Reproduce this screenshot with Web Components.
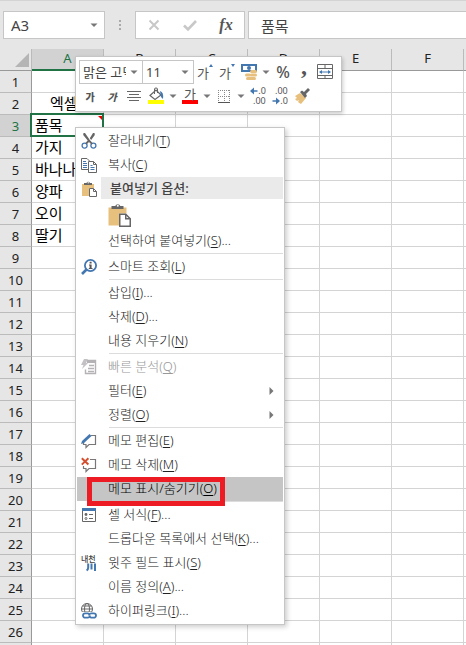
<!DOCTYPE html>
<html lang="ko">
<head>
<meta charset="utf-8">
<meta name="viewport" content="width=device-width, initial-scale=1">
<title>Sheet</title>
<style>
  html, body { height: 100%; }
  body {
    margin: 0;
    overflow: hidden;
    background: #fff;
    font-family: "Noto Sans", "Noto Sans CJK KR", sans-serif;
    font-size: 13px;
    color: #444;
    --chrome: #e6e6e6;
    --line: #d4d4d4;
    --edge: #c6c6c6;
    --blue: #4377b0;
    --green: #217346;
  }
</style>
</head>
<body>
<work-book></work-book>

<script>
const ICONS = {
  cut: `<g fill="none" stroke="#4377b0" stroke-width="1.3"><circle cx="3.600" cy="12.600" r="2.500"/><circle cx="12.400" cy="12.600" r="2.500"/></g>
    <path d="M2.500 0h1.500l5 7.200 2.800 3-1.400 1.200L8 8.900l-2.200 2.400-1.400-1.200 2.300-2.500L2.200 2zM13.500 0H12L8.800 5.200l1.400 1.800L13.800 2z" fill="#666"/>`,
  copy: `<g fill="#fff" stroke="#666"><path d="M.5 1.500h5.500l2.500 2.500v8.500h-8z"/><path d="M7.500 4.500h5l3 3v8h-8z"/><path d="M12.500 4.500v3h3" fill="none"/></g>
    <path d="M2 4.500h3M2 6.500h4M2 8.500h4M2 10.500h4M9.500 8.500h2M9.500 10.500h4M9.500 12.500h4" stroke="#4377b0"/>`,
  paste: `<path d="M1 3h12v4H8v8H1z" fill="#e8c07d"/><path d="M3 4V2h2.500a1.800 1.800 0 013.400 0H11v2z" fill="#666"/><circle cx="7.200" cy="1.800" r=".7" fill="#fff"/>
    <path d="M8.500 7.500h4l3 3v5h-7z" fill="#fff" stroke="#666"/><path d="M12.500 7.500v3h3" fill="none" stroke="#666"/>`,
  lookup: `<circle cx="9.500" cy="6.500" r="5.600" fill="#fff" stroke="#4377b0" stroke-width="1.800"/><path d="M5.500 10.500L1 15" stroke="#4377b0" stroke-width="2.600"/>
    <path d="M8.600 2.800h2v1.600h-2zM8 5.500h2.600v3.600h.9v1H7.800v-1h.8V6.500H8z" fill="#555"/>`,
  quick: `<path d="M6.500 1.500h8v13h-10v-4" fill="none" stroke="#b5b2b5" stroke-width="1.400"/><path d="M6 1h9v3H6z" fill="#b5b2b5"/><path d="M3 0h4L5 4h2L1 10l1.500-4H0z" fill="#c4c1c4"/>
    <path d="M8 6.500h5M7 9.500h6M7 12.500h6" stroke="#b5b2b5" stroke-width="1.400"/>`,
  edit: `<path d="M10 2.500h4.500v9H8L5 14.500v-3H2.500V9" fill="none" stroke="#777" stroke-width="1.200"/><path d="M8.500 1l2 2L3 10l-3 1 1-3z" fill="#4377b0"/>`,
  remove: `<path d="M9 2.500h5.500v9H8L5 14.500v-3H2.500V9" fill="none" stroke="#777" stroke-width="1.200"/><path d="M.8 1.200l6.600 6.200M7.400 1.200L.8 7.600" stroke="#d2502f" stroke-width="2"/>`,
  format: `<path d="M1.500 1.500h13v13h-13z" fill="#fff" stroke="#666"/><path d="M1 1h14v3H1z" fill="#4377b0"/><circle cx="5" cy="7.500" r="1.400" fill="#666"/><circle cx="5" cy="11.500" r="1" fill="none" stroke="#666"/><path d="M8 7.500h4M8 11.500h4" stroke="#666"/>`,
  ruby: `<text x="0" y="7" font-size="8" font-weight="500" fill="#444">내천</text><path d="M7.200 8.500v4q0 2-1.600 3M10.500 8.500v6M14 8.500v7.500" fill="none" stroke="#4377b0" stroke-width="2"/>`,
  link: `<g fill="none" stroke="#666"><circle cx="6" cy="6" r="5.500"/><ellipse cx="6" cy="6" rx="2.500" ry="5.500"/><path d="M.5 6h11M1.500 3h9M1.500 9h9"/></g>
    <rect x="1" y="9" width="15" height="7" fill="#fff"/><g fill="none" stroke="#4377b0" stroke-width="1.800"><path d="M9 12.500a2.400 2.400 0 01-2.400 2.200H4.200a2.200 2.200 0 010-4.400h2.400q1 0 1.700.8"/><path d="M8 12.500a2.400 2.400 0 012.400-2.200h2.400a2.200 2.200 0 010 4.400h-2.400q-1 0-1.700-.8"/></g>`,
  money: `<path d="M0 0h16v8H0z" fill="#4377b0"/><path d="M2 2h12v4H2z" fill="#fff"/><circle cx="8" cy="4" r="2" fill="#4377b0"/><path d="M4 8.500h12V16H4z" fill="#fff"/>
    <g fill="#e8c07d"><rect x="9" y="6" width="7" height="3" rx="1.500"/><rect x="9" y="9.500" width="7" height="3" rx="1.500"/><rect x="4" y="9.500" width="6" height="3" rx="1.500"/><rect x="5" y="13" width="10" height="3" rx="1.500"/></g>`,
  merge: `<g fill="none" stroke="#666"><path d="M.5.500h15v14H.5zM.5 4.500h15M.5 11.500h15M8 .5v4M8 11.500v3"/></g><path d="M3 8h10" stroke="#4377b0"/><path d="M5 6L2 8l3 2zM11 6l3 2-3 2z" fill="#4377b0"/>`,
  align: `<path d="M1 3.500h14M3 6.500h10M1 9.500h14M3 12.500h10" stroke="#666"/>`,
  bucket: `<path d="M2 7.500L8 2l5 5-6 4.500z" fill="#fff" stroke="#666" stroke-width="1.200"/><path d="M6.500 6V1q0-1 1.500-1t1.500 1v4" fill="none" stroke="#666"/><path d="M12 3q4 1 3 8l-2-2z" fill="#4377b0"/><path d="M0 12h16v4H0z" fill="#ff0"/>`,
  borders: `<g stroke="#888" stroke-dasharray="1 1"><path d="M2 2.500h12M2 8.500h12M2.500 2v12M8.500 2v12M13.500 2v12" fill="none"/></g><path d="M2 14.500h12" stroke="#555"/>`,
  brush: `<path d="M1 8l5-3 6 5-5 6q-2-1-3-2l1-2-2 1-2-2 2-1z" fill="#e8c07d"/><path d="M6 4l2-1.500 2 1.500 4-4 2 2-4 4 1 2-2 2z" fill="#666"/>`,
  arrowleft: `<path d="M15 8H4" stroke="#4377b0" stroke-width="3"/><path d="M8 1L0 8l8 7z" fill="#4377b0"/>`,
  arrowright: `<path d="M1 8h11" stroke="#4377b0" stroke-width="3"/><path d="M8 1l8 7-8 7z" fill="#4377b0"/>`,
  cancel: `<path d="M3.500 3.500l9 9M12.500 3.500l-9 9" stroke="#c8c8c8" stroke-width="2"/>`,
  accept: `<path d="M2 8.500l4 4L14 4" fill="none" stroke="#c8c8c8" stroke-width="2.600"/>`,
  caret: `<path d="M4.500 6.500h7L8 10z" fill="#777"/>`,
  right: `<path d="M6.500 4l4 4-4 4z" fill="#777"/>`
};

class UiIcon extends HTMLElement {
  connectedCallback() {
    this.attachShadow({ mode: "open" }).innerHTML = `
      <style>
        :host { display: block; flex: none; width: var(--size, 16px); height: var(--size, 16px); }
        svg { display: block; width: 100%; height: 100%; overflow: visible; }
      </style>
      <svg viewBox="0 0 16 16" aria-hidden="true">${ICONS[this.getAttribute("name")]}</svg>`;
  }
}

class FormulaBar extends HTMLElement {
  connectedCallback() {
    this.attachShadow({ mode: "open" }).innerHTML = `
      <style>
        :host { display: flex; padding: 10px 0 10px 3px; background: var(--chrome); border-top: 1px solid var(--line); }
        .box { display: flex; align-items: center; box-sizing: border-box; height: 28px; background: #fff; border: 1px solid var(--edge); }
        .name { flex: none; width: 102px; }
        .grip { display: flex; flex: none; flex-direction: column; justify-content: center; align-items: center; gap: 2px; width: 30px; }
        .grip i { width: 2px; height: 2px; background: #aaa; }
        input { flex: 1; min-width: 0; border: 0; padding: 0; outline: 0; background: none; font: inherit; font-size: 15px; color: #444; }
        .name input { padding-left: 7px; }
        button { display: flex; justify-content: center; align-items: center; border: 0; padding: 0; background: none; color: #555; }
        .name button { width: 20px; }
        .tools { flex: none; }
        .tools button { width: 36px; }
        .fx { font: italic bold 16px "Liberation Serif", serif; }
        .formula { flex: 1; min-width: 0; margin-left: 3px; border-right: 0; }
        .formula input { padding-left: 12px; }
      </style>
      <div class="box name">
        <input aria-label="이름 상자" value="A3">
        <button aria-label="이름 목록"><ui-icon name="caret"></ui-icon></button>
      </div>
      <div class="grip"><i></i><i></i><i></i></div>
      <div class="box tools">
        <button aria-label="취소"><ui-icon name="cancel"></ui-icon></button>
        <button aria-label="입력"><ui-icon name="accept"></ui-icon></button>
        <button class="fx">fx</button>
      </div>
      <div class="box formula"><input aria-label="수식 입력줄" value="품목"></div>`;
  }
}

class SheetGrid extends HTMLElement {
  connectedCallback() {
    const cols = ["A", "B", "C", "D", "E", "F", ""];
    const lastRow = 26;
    const data = { 2: "엑셀", 3: "품목", 4: "가지", 5: "바나나", 6: "양파", 7: "오이", 8: "딸기" };
    let rows = "";
    for (let r = 1; r <= lastRow + 1; r++) {
      const on = r === 3 ? ' class="on"' : "";
      const cells = cols.map((c, i) => {
        const cls = i === 0 && r === 3 ? ' class="active"' : i === 0 && r === 2 ? ' class="title"' : "";
        return `<td${cls}>${i === 0 && data[r] ? data[r] : ""}</td>`;
      });
      rows += `<tr><th scope="row"${on}>${r > lastRow ? "" : r}</th>${cells.join("")}</tr>`;
    }
    this.attachShadow({ mode: "open" }).innerHTML = `
      <style>
        :host { display: block; overflow: hidden; }
        table { table-layout: fixed; border-spacing: 0; width: max-content; }
        .head { width: 32px; }
        .col { width: 72px; }
        th, td { box-sizing: border-box; height: 22px; padding: 0; line-height: 20px; white-space: nowrap; }
        th { background: var(--chrome); color: #222; font-weight: 400; font-size: 13px; }
        thead th { border-right: 1px solid #bbb; border-bottom: 1px solid #999; line-height: 18px; vertical-align: top; }
        thead th.on { border-bottom: 2px solid var(--green); }
        tbody th { border-right: 1px solid #999; border-bottom: 1px solid #bbb; }
        th.on { background: #d2d2d2; color: var(--green); }
        td { border-right: 1px solid var(--line); border-bottom: 1px solid var(--line); padding-left: 3px; line-height: 20px; vertical-align: top; font-size: 15px; color: #000; }
        .title { padding-left: 18px; }
        .corner::after {
          content: "";
          display: block;
          width: 14px;
          height: 14px;
          margin: 4px 2px 0 auto;
          background: #b5b5b5;
          clip-path: polygon(100% 0, 100% 100%, 0 100%);
        }
        .active { position: relative; }
        .active::before { content: ""; position: absolute; inset: -2px -1px -1px -2px; border: 2px solid var(--green); }
        .active::after { content: ""; position: absolute; top: 1px; right: 1px; border: 2px solid; border-color: #e00 #e00 transparent transparent; }
      </style>
      <table>
        <colgroup><col class="head">${cols.map(() => '<col class="col">').join("")}</colgroup>
        <thead><tr><th class="corner"></th>${cols.map(c => `<th scope="col"${c === "A" ? ' class="on"' : ""}>${c}</th>`).join("")}</tr></thead>
        <tbody>${rows}</tbody>
      </table>`;
  }
}

class MiniToolbar extends HTMLElement {
  connectedCallback() {
    const caret = `<button class="more" aria-label="더 보기"><ui-icon name="caret"></ui-icon></button>`;
    const tool = (name, label) => `<button aria-label="${label}"><ui-icon name="${name}"></ui-icon></button>`;
    this.attachShadow({ mode: "open" }).innerHTML = `
      <style>
        :host { display: block; box-sizing: border-box; padding: 3px; background: #fff; border: 1px solid var(--edge); box-shadow: 1px 2px 4px rgba(0, 0, 0, .2); }
        .row { display: flex; height: 24px; }
        .combo { display: grid; box-sizing: border-box; width: 64px; border: 1px solid var(--edge); }
        .combo + .combo { width: 51px; border-left: 0; }
        select, .combo ui-icon { grid-area: 1 / 1; }
        .combo ui-icon { justify-self: end; align-self: center; pointer-events: none; }
        select { appearance: none; min-width: 0; width: 100%; border: 0; padding: 0 16px 0 3px; background: none; color: #444; font: inherit; }
        button { display: flex; justify-content: center; align-items: center; width: 22px; border: 0; padding: 0; background: none; font: inherit; font-size: 13px; color: #555; }
        .more { width: 12px; }
        .bold { font-size: 10px; font-weight: 900; }
        .italic { font-style: italic; }
        .up::after, .down::after { content: ""; align-self: flex-start; margin-top: 4px; border: 2px solid transparent; }
        .up::after { border-bottom: 3px solid var(--blue); border-top: 0; }
        .down::after { border-top: 3px solid var(--blue); border-bottom: 0; }
        .percent { font-size: 16px; line-height: 18px; font-weight: 500; }
        .comma { font: bold 24px/10px "Liberation Serif", serif; padding-bottom: 12px; width: 20px; }
        .color span { line-height: 12px; border-bottom: 4px solid #f00; padding: 0 2px; }
        .digits { display: grid; grid-template-columns: auto auto; align-content: center; justify-content: center; align-items: center; font-size: 9px; line-height: 10px; --size: 8px; }
        .digits .wide { grid-column: 1 / 3; justify-self: end; }
      </style>
      <div class="row">
        <div class="combo"><select aria-label="글꼴"><option>맑은 고딕</option></select><ui-icon name="caret"></ui-icon></div>
        <div class="combo"><select aria-label="글꼴 크기"><option>11</option></select><ui-icon name="caret"></ui-icon></div>
        <button class="up">가</button>
        <button class="down">가</button>
        ${tool("money", "회계 표시 형식")}${caret}
        <button class="percent">%</button>
        <button class="comma">,</button>
        ${tool("merge", "병합하고 가운데 맞춤")}
      </div>
      <div class="row">
        <button class="bold">가</button>
        <button class="bold italic">가</button>
        ${tool("align", "가운데 맞춤")}
        ${tool("bucket", "채우기 색")}${caret}
        <button class="color"><span>가</span></button>${caret}
        ${tool("borders", "테두리")}${caret}
        <button class="digits"><ui-icon name="arrowleft"></ui-icon><span>.0</span><span class="wide">.00</span></button>
        <button class="digits"><span class="wide">.00</span><ui-icon name="arrowright"></ui-icon><span>.0</span></button>
        ${tool("brush", "서식 복사")}
      </div>`;
  }
}

/**
 * <menu-item> — one command row.
 * Attributes: key (access key), icon, more (trailing dots), submenu, marked, disabled
 */
class MenuItem extends HTMLElement {
  connectedCallback() {
    const icon = this.getAttribute("icon");
    const off = this.hasAttribute("disabled");
    this.attachShadow({ mode: "open" }).innerHTML = `
      <style>
        :host { display: block; }
        button {
          display: grid;
          grid-template-columns: 16px 1fr 16px;
          column-gap: 11px;
          align-items: center;
          width: 100%;
          height: 24px;
          border: 0;
          padding: 0 4px;
          background: none;
          color: #222;
          font: inherit;
          font-weight: 300;
          line-height: 20px;
          text-align: left;
          white-space: nowrap;
        }
        button:disabled { color: #999; }
        .label { padding-bottom: 2px; }
        u { text-underline-offset: 2px; }
        :host([marked]) { position: relative; background: #c5c5c5; }
        :host([marked]) button { color: #000; }
        :host([marked])::after {
          content: "";
          position: absolute;
          box-sizing: border-box;
          inset: 0 58px -5px 10px;
          border: 5px solid #ed1c24;
        }
      </style>
      <button role="menuitem"${off ? " disabled" : ""}>
        ${icon ? `<ui-icon name="${icon}"></ui-icon>` : "<span></span>"}
        <span class="label"><slot></slot>(<u>${this.getAttribute("key")}</u>)${this.hasAttribute("more") ? "..." : ""}</span>
        ${this.hasAttribute("submenu") ? '<ui-icon name="right"></ui-icon>' : ""}
      </button>`;
  }
}

class MenuLine extends HTMLElement {
  connectedCallback() {
    this.attachShadow({ mode: "open" }).innerHTML = `
      <style>:host { display: block; height: 1px; margin: 0 0 1px 32px; background: #dcdcdc; }</style>`;
  }
}

class PasteOptions extends HTMLElement {
  connectedCallback() {
    this.attachShadow({ mode: "open" }).innerHTML = `
      <style>
        :host { display: block; }
        .title { display: flex; align-items: center; gap: 4px; height: 24px; padding-left: 4px; }
        b { flex: 1; margin-bottom: 2px; padding-left: 9px; line-height: 22px; font-weight: 500; background: #eaeaea; color: #444; }
        button { display: block; height: 28px; margin-left: 30px; border: 0; padding: 0; background: none; --size: 24px; }
      </style>
      <div class="title"><ui-icon name="paste"></ui-icon><b><slot></slot></b></div>
      <button aria-label="붙여넣기"><ui-icon name="paste"></ui-icon></button>`;
  }
}

class ContextMenu extends HTMLElement {
  connectedCallback() {
    this.setAttribute("role", "menu");
    this.attachShadow({ mode: "open" }).innerHTML = `
      <style>
        :host { display: block; box-sizing: border-box; padding: 1px; background: #fff; border: 1px solid var(--edge); box-shadow: 2px 2px 5px rgba(0, 0, 0, .2); }
      </style>
      <slot></slot>`;
  }
}

class WorkBook extends HTMLElement {
  connectedCallback() {
    this.attachShadow({ mode: "open" }).innerHTML = `
      <style>
        :host { display: block; position: relative; height: 100%; overflow: hidden; }
        mini-toolbar { position: absolute; left: 75px; top: 56px; width: 267px; }
        context-menu { position: absolute; left: 75px; top: 127px; width: 210px; }
      </style>
      <formula-bar></formula-bar>
      <sheet-grid></sheet-grid>
      <mini-toolbar></mini-toolbar>
      <context-menu>
        <menu-item icon="cut" key="T">잘라내기</menu-item>
        <menu-item icon="copy" key="C">복사</menu-item>
        <paste-options>붙여넣기 옵션:</paste-options>
        <menu-item key="S" more>선택하여 붙여넣기</menu-item>
        <menu-line></menu-line>
        <menu-item icon="lookup" key="L">스마트 조회</menu-item>
        <menu-line></menu-line>
        <menu-item key="I" more>삽입</menu-item>
        <menu-item key="D" more>삭제</menu-item>
        <menu-item key="N">내용 지우기</menu-item>
        <menu-line></menu-line>
        <menu-item icon="quick" key="Q" disabled>빠른 분석</menu-item>
        <menu-item key="E" submenu>필터</menu-item>
        <menu-item key="O" submenu>정렬</menu-item>
        <menu-line></menu-line>
        <menu-item icon="edit" key="E">메모 편집</menu-item>
        <menu-item icon="remove" key="M">메모 삭제</menu-item>
        <menu-item key="O" marked>메모 표시/숨기기</menu-item>
        <menu-line></menu-line>
        <menu-item icon="format" key="F" more>셀 서식</menu-item>
        <menu-item key="K" more>드롭다운 목록에서 선택</menu-item>
        <menu-item icon="ruby" key="S">윗주 필드 표시</menu-item>
        <menu-item key="A" more>이름 정의</menu-item>
        <menu-item icon="link" key="I" more>하이퍼링크</menu-item>
      </context-menu>`;
  }
}

customElements.define("ui-icon", UiIcon);
customElements.define("formula-bar", FormulaBar);
customElements.define("sheet-grid", SheetGrid);
customElements.define("mini-toolbar", MiniToolbar);
customElements.define("menu-item", MenuItem);
customElements.define("menu-line", MenuLine);
customElements.define("paste-options", PasteOptions);
customElements.define("context-menu", ContextMenu);
customElements.define("work-book", WorkBook);
</script>
</body>
</html>
